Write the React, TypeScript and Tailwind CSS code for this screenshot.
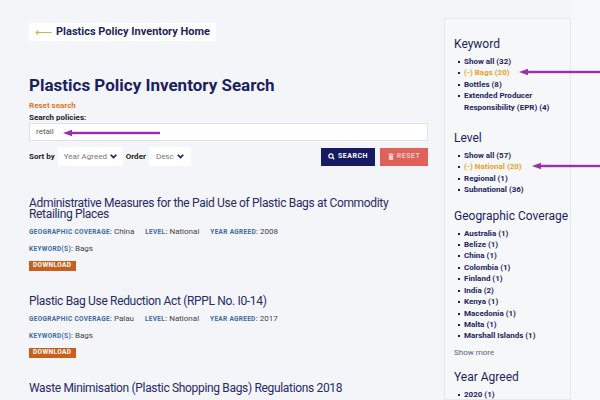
import React from "react";

const navy = "text-[#1b1f5e]";

function Meta({ label, value }: { label: string; value: string }) {
  return (
    <span className="mr-[11px] whitespace-nowrap">
      <span className="text-[6.5px] font-bold tracking-[0.3px] text-[#3c6aa6]">{label}: </span>
      <span className="text-[8px] text-[#444]">{value}</span>
    </span>
  );
}

function Result({ title, geo, level, year }: { title: string; geo: string; level: string; year: string }) {
  return (
    <div className="mb-[25px]">
      <div className="text-[12px] leading-[11px] tracking-[-0.33px] text-[#262a66]">{title}</div>
      <div className="mt-[3px] flex h-[12px] items-center">
        <Meta label="GEOGRAPHIC COVERAGE" value={geo} />
        <Meta label="LEVEL" value={level} />
        <Meta label="YEAR AGREED" value={year} />
      </div>
      <div className="mt-[5px] flex h-[12px] items-center">
        <Meta label="KEYWORD(S)" value="Bags" />
      </div>
      <div className="mt-[9px] flex h-[10px] w-fit items-center bg-[#c8601c] px-[4px] text-[6.5px] font-bold tracking-[0.4px] text-white">
        DOWNLOAD
      </div>
    </div>
  );
}

function Item({ children, active }: { children: React.ReactNode; active?: boolean }) {
  return (
    <li className="flex">
      <span className="mt-[5px] mr-[4px] h-[2px] w-[2px] shrink-0 bg-[#1b1f5e]" />
      <span className={active ? "text-[#e9a424]" : "text-[#1b1f5e]"}>{children}</span>
    </li>
  );
}

function Chevron() {
  return (
    <svg width="7" height="5" viewBox="0 0 10 7" className="ml-auto shrink-0">
      <path d="M1 1l4 4 4-4" stroke="#1b1f5e" strokeWidth="2.4" fill="none" />
    </svg>
  );
}

function Arrow({ width }: { width: number }) {
  return (
    <svg width={width} height="8" viewBox={`0 0 ${width} 8`}>
      <path d={`M0 4 L9 0.8 L9 7.2 Z`} fill="#9a2fae" />
      <rect x="6" y="2.8" width={width - 6} height="2.4" fill="#9a2fae" />
    </svg>
  );
}

export default function App() {
  return (
    <div className="relative flex h-[400px] w-[600px] overflow-hidden bg-[#f4f5f8]" style={{ fontFamily: "Roboto, 'Liberation Sans', sans-serif" }}>
      {/* main column */}
      <div className="w-[444px] shrink-0 pl-[29px] pr-[16px] pt-[23px]">
        <div className="flex h-[18px] w-fit items-center bg-white pl-[6px] pr-[6px]">
          <span className="mr-[4px] text-[12px] leading-none text-[#a9c447]">⟵</span>
          <span className={`text-[11px] font-bold ${navy}`}>Plastics Policy Inventory Home</span>
        </div>
        <h1 className={`mt-[33px] text-[17px] font-bold leading-[22px] ${navy}`}>Plastics Policy Inventory Search</h1>
        <div className="mt-[5px] text-[8px] font-bold leading-[10px] text-[#d97a2c]">Reset search</div>
        <div className="mt-[2px] text-[8px] font-bold leading-[10px] text-[#222]">Search policies:</div>
        <div className="relative flex h-[18px] items-center border border-[#e1e3e8] bg-white pl-[6px] text-[8px] text-[#555]">
          retail
          <div className="absolute left-[33px] top-[5px]">
            <Arrow width={97} />
          </div>
        </div>
        <div className="mt-[6px] flex h-[19px] items-center text-[8px] whitespace-nowrap">
          <span className="mr-[3px] font-bold text-[#222]">Sort by</span>
          <div className="flex h-[19px] w-[65px] items-center bg-white px-[6px] text-[#777]">
            Year Agreed
            <Chevron />
          </div>
          <span className="mx-[3px] font-bold text-[#222]">Order</span>
          <div className="flex h-[19px] w-[42px] items-center bg-white px-[7px] text-[#777]">
            Desc
            <Chevron />
          </div>
          <div className="ml-auto flex h-[18px] w-[54px] items-center justify-center bg-[#161a63] text-[7px] font-bold tracking-[0.5px] text-white">
            <svg width="7" height="7" viewBox="0 0 10 10" className="mr-[3px]">
              <circle cx="4.2" cy="4.2" r="3" stroke="white" strokeWidth="1.6" fill="none" />
              <path d="M6.5 6.5L9 9" stroke="white" strokeWidth="1.8" />
            </svg>
            SEARCH
          </div>
          <div className="ml-[5px] flex h-[18px] w-[48px] items-center justify-center bg-[#e0605a] text-[7px] font-bold tracking-[0.5px] text-[#f7cdc9]">
            <svg width="6" height="7" viewBox="0 0 8 10" className="mr-[3px]">
              <rect x="0" y="1" width="8" height="1.4" fill="#f7cdc9" />
              <rect x="2.8" y="0" width="2.4" height="1.2" fill="#f7cdc9" />
              <rect x="1" y="3" width="6" height="7" fill="#f7cdc9" />
            </svg>
            RESET
          </div>
        </div>
        <div className="mt-[32px]">
          <Result
            title="Administrative Measures for the Paid Use of Plastic Bags at Commodity Retailing Places"
            geo="China"
            level="National"
            year="2008"
          />
          <Result title="Plastic Bag Use Reduction Act (RPPL No. I0-14)" geo="Palau" level="National" year="2017" />
          <Result title="Waste Minimisation (Plastic Shopping Bags) Regulations 2018" geo="New Zealand" level="National" year="2018" />
        </div>
      </div>
      {/* sidebar */}
      <div className="mt-[18px] w-[127px] shrink-0 border border-[#e6e8ec] bg-[#f6f7f9] pl-[9px] pt-[18px]">
        <h2 className={`text-[12px] leading-[14px] ${navy}`}>Keyword</h2>
        <ul className="mt-[5px] ml-[4px] text-[8px] font-bold leading-[11.4px]">
          <Item>Show all (32)</Item>
          <Item active>(-) Bags (20)</Item>
          <Item>Bottles (8)</Item>
          <Item>
            Extended Producer
            <br />
            Responsibility (EPR) (4)
          </Item>
        </ul>
        <h2 className={`mt-[18px] text-[12px] leading-[14px] ${navy}`}>Level</h2>
        <ul className="mt-[5px] ml-[4px] text-[8px] font-bold leading-[11.4px]">
          <Item>Show all (57)</Item>
          <Item active>(-) National (20)</Item>
          <Item>Regional (1)</Item>
          <Item>Subnational (36)</Item>
        </ul>
        <h2 className={`mt-[13px] text-[12px] leading-[14px] ${navy}`}>Geographic Coverage</h2>
        <ul className="mt-[5px] ml-[4px] text-[8px] font-bold leading-[11.4px]">
          <Item>Australia (1)</Item>
          <Item>Belize (1)</Item>
          <Item>China (1)</Item>
          <Item>Colombia (1)</Item>
          <Item>Finland (1)</Item>
          <Item>India (2)</Item>
          <Item>Kenya (1)</Item>
          <Item>Macedonia (1)</Item>
          <Item>Malta (1)</Item>
          <Item>Marshall Islands (1)</Item>
        </ul>
        <div className="mt-[6px] text-[8px] leading-[10px] text-[#5a5f7a]">Show more</div>
        <h2 className={`mt-[12px] text-[12px] leading-[14px] ${navy}`}>Year Agreed</h2>
        <ul className="mt-[5px] ml-[4px] text-[8px] font-bold leading-[11.4px]">
          <Item>2020 (1)</Item>
        </ul>
      </div>
      <div className="flex-1 bg-[#f7f8fa]" />
      {/* arrows over sidebar */}
      <div className="absolute left-[519px] top-[68px]">
        <Arrow width={81} />
      </div>
      <div className="absolute left-[532px] top-[162px]">
        <Arrow width={68} />
      </div>
    </div>
  );
}
